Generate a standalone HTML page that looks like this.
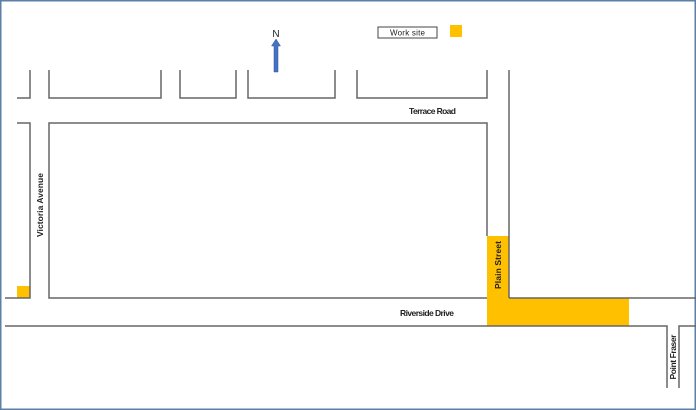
<!DOCTYPE html>
<html><head><style>
html,body{margin:0;padding:0;background:#fff}
svg{display:block}
text{font-family:"Liberation Sans",sans-serif;font-size:8.5px;fill:#222;font-weight:bold}
</style></head><body>
<svg width="696" height="410" viewBox="0 0 696 410" xmlns="http://www.w3.org/2000/svg">
<rect x="0" y="0" width="696" height="410" fill="#fff"/>
<rect x="0.75" y="0.75" width="694.5" height="408.5" fill="none" stroke="#5b7fa6" stroke-width="1.5"/>
<g fill="#ffc000">
<rect x="487" y="236" width="22" height="90"/>
<rect x="487" y="298" width="142" height="28"/>
<rect x="17" y="286" width="13" height="12"/>
<rect x="450" y="25" width="12" height="12"/>
</g>
<g stroke="#666" stroke-width="1.5" fill="none">
<polyline points="17,98 30,98 30,70"/>
<polyline points="49,70 49,98 161,98 161,70"/>
<polyline points="180,70 180,98 236,98 236,70"/>
<polyline points="248,70 248,98 335,98 335,70"/>
<polyline points="357,70 357,98 487,98 487,70"/>
<line x1="509" y1="70" x2="509" y2="298"/>
<polyline points="487,236 487,123 49,123 49,298 487,298"/>
<polyline points="17,123 30,123 30,298 5,298"/>
<line x1="509" y1="298" x2="696" y2="298"/>
<polyline points="5,326 667,326 667,388"/>
<polyline points="679,388 679,326 696,326"/>
</g>
<rect x="378" y="27" width="59" height="11" fill="#fff" stroke="#444" stroke-width="1"/>
<text x="407.5" y="35.5" text-anchor="middle" style="font-size:8px;font-weight:normal" textLength="35">Work site</text>
<text x="276" y="37" text-anchor="middle" style="font-size:10px;font-weight:normal">N</text>
<path d="M274,72 L274,46 L271.5,46 L276,39 L280.5,46 L278,46 L278,72 Z" fill="#4472c4" stroke="#2f5597" stroke-width="0.5"/>
<text x="409" y="114" textLength="47">Terrace Road</text>
<text x="400" y="316" textLength="54">Riverside Drive</text>
<text transform="translate(43,205) rotate(-90)" text-anchor="middle" textLength="64">Victoria Avenue</text>
<text transform="translate(501,265) rotate(-90)" text-anchor="middle" textLength="48">Plain Street</text>
<text transform="translate(676,357) rotate(-90)" text-anchor="middle" textLength="45">Point Fraser</text>
</svg>
</body></html>
